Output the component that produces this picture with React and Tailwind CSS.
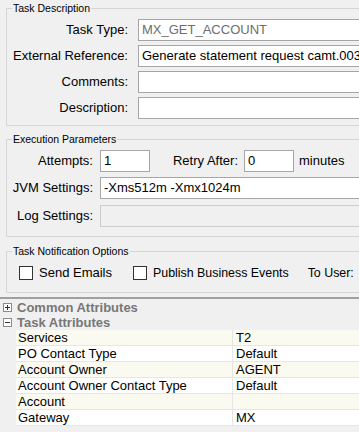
import React from 'react';

const FONT = { fontFamily: '"Liberation Sans", Arial, sans-serif' };

const Group = ({ title, className, children }) => (
    <fieldset className={`border border-[#d5d5d5] ml-[6px] w-[420px] ${className}`}>
        <legend className="ml-[5px] px-[1px] h-[14px] leading-[14px] text-[10.5px] text-black">{title}</legend>
        {children}
    </fieldset>
);

const FieldRow = ({ label, value, muted, disabled, className }) => (
    <div className={`flex items-center h-[22px] ${className}`}>
        <span className="w-[121px] text-right">{label}</span>
        <div className={`ml-[10px] w-[300px] h-[22px] border flex items-center px-[3px] whitespace-nowrap ${disabled ? 'bg-[#f0f0f0] border-[#cccccc]' : 'bg-white border-[#a6a6a6]'} ${muted ? 'text-[#6d6d6d]' : 'text-black'}`}>
            {value}
        </div>
    </div>
);

const TreeToggle = ({ open }) => (
    <svg width="9" height="9" viewBox="0 0 9 9" className="shrink-0">
        <rect x="0.5" y="0.5" width="8" height="8" fill="#fff" stroke="#8a8a8a" />
        <line x1="2" y1="4.5" x2="7" y2="4.5" stroke="#333" />
        {!open && <line x1="4.5" y1="2" x2="4.5" y2="7" stroke="#333" />}
    </svg>
);

const rows = [
    ['Services', 'T2'],
    ['PO Contact Type', 'Default'],
    ['Account Owner', 'AGENT'],
    ['Account Owner Contact Type', 'Default'],
    ['Account', ''],
    ['Gateway', 'MX'],
];

export default function App() {
    return (
        <div style={FONT} className="w-[359px] h-[432px] overflow-hidden bg-[#f0f0f0] text-[13px] text-black pt-[1px]">
            {/* Task Description */}
            <Group title="Task Description" className="pt-[4px] pb-[6px]">
                <FieldRow label="Task Type:" value="MX_GET_ACCOUNT" muted />
                <FieldRow label="External Reference:" value="Generate statement request camt.003" className="mt-[4px]" />
                <FieldRow label="Comments:" value="" className="mt-[4px]" />
                <FieldRow label="Description:" value="" className="mt-[4px]" />
            </Group>

            {/* Execution Parameters */}
            <Group title="Execution Parameters" className="mt-[6px] pt-[4px] pb-[9px]">
                <div className="flex items-center h-[22px]">
                    <span className="w-[86px] text-right">Attempts:</span>
                    <div className="ml-[7px] w-[50px] h-[22px] bg-white border border-[#a6a6a6] flex items-center px-[3px]">1</div>
                    <span className="w-[88px] text-right">Retry After:</span>
                    <div className="ml-[6px] w-[50px] h-[22px] bg-white border border-[#a6a6a6] flex items-center px-[3px]">0</div>
                    <span className="ml-[5px]">minutes</span>
                </div>
                <div className="flex items-center h-[22px] mt-[5px]">
                    <span className="w-[86px] text-right">JVM Settings:</span>
                    <div className="ml-[7px] w-[320px] h-[22px] bg-white border border-[#a6a6a6] flex items-center px-[3px]">-Xms512m -Xmx1024m</div>
                </div>
                <div className="flex items-center h-[22px] mt-[6px]">
                    <span className="w-[86px] text-right">Log Settings:</span>
                    <div className="ml-[7px] w-[320px] h-[22px] bg-[#f0f0f0] border border-[#cccccc]"></div>
                </div>
            </Group>

            {/* Task Notification Options */}
            <Group title="Task Notification Options" className="mt-[7px] pt-[4px] pb-[8px]">
                <div className="flex items-center h-[22px] whitespace-nowrap">
                    <div className="ml-[12px] w-[14px] h-[14px] bg-white border border-[#333333] shrink-0"></div>
                    <span className="ml-[6px]">Send Emails</span>
                    <div className="ml-[21px] w-[14px] h-[14px] bg-white border border-[#333333] shrink-0"></div>
                    <span className="ml-[6px] text-[12.4px]">Publish Business Events</span>
                    <span className="ml-[19px] text-[12.4px]">To User:</span>
                </div>
            </Group>

            <div className="mt-[4px] h-[2px] bg-[#a0a0a0]"></div>

            {/* Tree */}
            <div className="mt-[1px] flex items-center h-[15px] pl-[3px] gap-[5px]">
                <TreeToggle open={false} />
                <span className="font-bold text-[#777777]">Common Attributes</span>
            </div>
            <div className="flex items-center h-[15px] pl-[3px] gap-[5px]">
                <TreeToggle open />
                <span className="font-bold text-[#777777]">Task Attributes</span>
            </div>

            <div className="ml-[16px]">
                {rows.map(([k, v], i) => (
                    <div key={k} className={`flex h-[16px] leading-[15px] border-b border-[#e6e6e6] ${i % 2 === 0 ? 'bg-[#fafaf0]' : 'bg-white'}`}>
                        <div className="w-[217px] pl-[2px] border-r border-[#e6e6e6]">{k}</div>
                        <div className="flex-1 pl-[3px]">{v}</div>
                    </div>
                ))}
            </div>
        </div>
    );
}
